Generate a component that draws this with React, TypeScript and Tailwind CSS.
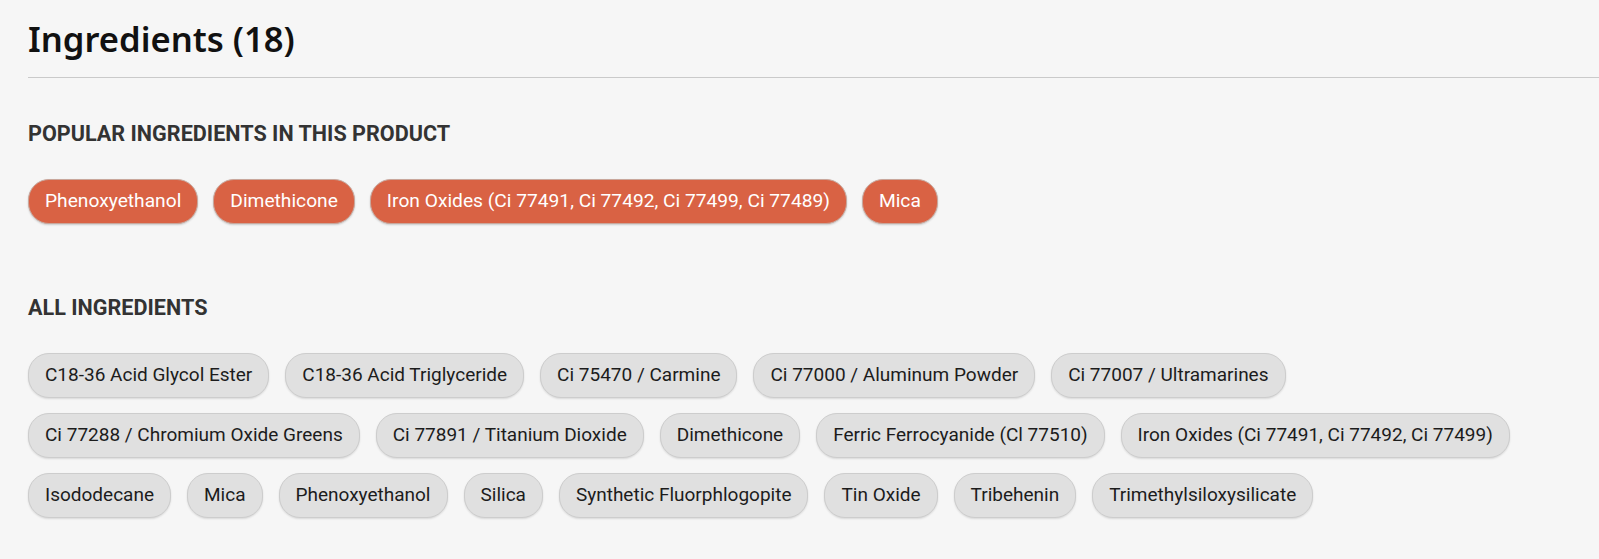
const popular = [
  'Phenoxyethanol',
  'Dimethicone',
  'Iron Oxides (Ci 77491, Ci 77492, Ci 77499, Ci 77489)',
  'Mica',
];

const allIngredients = [
  'C18-36 Acid Glycol Ester',
  'C18-36 Acid Triglyceride',
  'Ci 75470 / Carmine',
  'Ci 77000 / Aluminum Powder',
  'Ci 77007 / Ultramarines',
  'Ci 77288 / Chromium Oxide Greens',
  'Ci 77891 / Titanium Dioxide',
  'Dimethicone',
  'Ferric Ferrocyanide (Cl 77510)',
  'Iron Oxides (Ci 77491, Ci 77492, Ci 77499)',
  'Isododecane',
  'Mica',
  'Phenoxyethanol',
  'Silica',
  'Synthetic Fluorphlogopite',
  'Tin Oxide',
  'Tribehenin',
  'Trimethylsiloxysilicate',
];

function Chip({ label, popular }: { label: string; popular?: boolean }) {
  return (
    <button
      className={
        popular
          ? 'flex h-[45px] items-center rounded-[21px] border border-[#c9a79c] bg-[#d96244] px-4 text-[19.2px] text-white shadow-[0_1px_2px_rgba(0,0,0,0.18)]'
          : 'flex h-[45px] items-center rounded-[21px] border border-[#cdcdcd] bg-[#e0e0e0] px-4 text-[19px] text-[#1c1c1c] shadow-[0_1px_2px_rgba(0,0,0,0.12)]'
      }
    >
      {label}
    </button>
  );
}

export default function App() {
  return (
    <div className="min-h-[559px] w-full bg-[#f6f6f6] pl-[28px] font-['Roboto',sans-serif]">
      <h1 className="pt-[14px] pb-[13px] font-['Noto_Sans',sans-serif] text-[34.6px] leading-[50px] font-semibold text-[#111]">
        Ingredients (18)
      </h1>
      <div className="h-px bg-[#cacaca]" />

      {/* Popular */}
      <h2 className="mt-[43px] text-[21.6px] leading-[26px] font-bold text-[#333]">
        POPULAR INGREDIENTS IN THIS PRODUCT
      </h2>
      <div className="mt-[32px] flex flex-wrap gap-[15px]">
        {popular.map((p) => (
          <Chip key={p} label={p} popular />
        ))}
      </div>

      {/* All */}
      <h2 className="mt-[71px] text-[21.6px] leading-[26px] font-bold text-[#333]">ALL INGREDIENTS</h2>
      <div className="mt-[32px] flex flex-wrap gap-x-[16px] gap-y-[15px] pb-[40px]">
        {allIngredients.map((i) => (
          <Chip key={i} label={i} />
        ))}
      </div>
    </div>
  );
}
